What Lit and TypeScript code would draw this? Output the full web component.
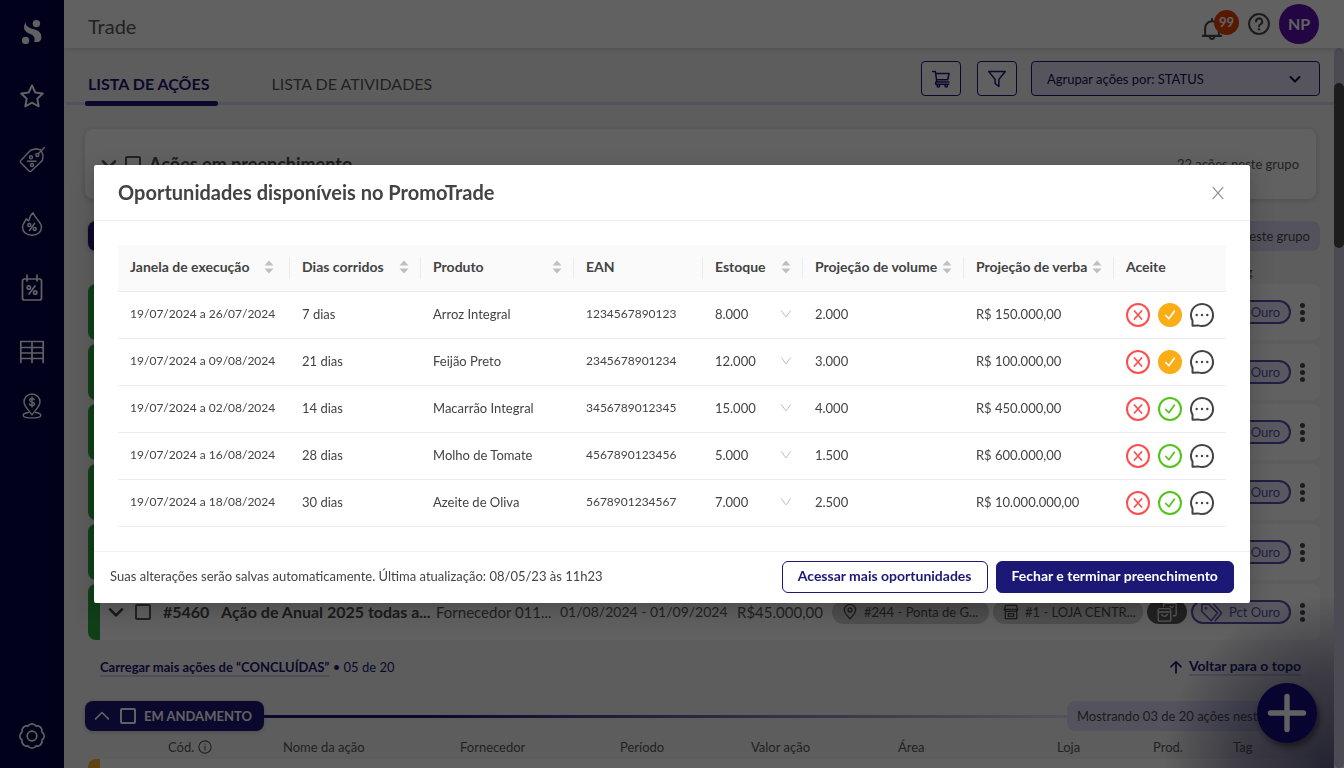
import { LitElement, html, svg, css } from "lit";
import { customElement, state } from "lit/decorators.js";
import { classMap } from "lit/directives/class-map.js";

const base = css`
  * { box-sizing: border-box; }
  button, select, input { font: inherit; color: inherit; margin: 0; }
  button { padding: 0; border: 0; background: none; cursor: pointer; }
  select { appearance: none; border: 0; border-radius: 0; background: none; padding: 0; outline: none; }
  a { color: inherit; text-decoration: none; }
  svg { display: block; flex: none; fill: none; stroke: currentColor; stroke-linecap: round; stroke-linejoin: round; }
  .solid { fill: currentColor; stroke: none; }
`;

const icon = (size: number, body: unknown, stroke = 2) =>
  html`<svg width=${size} height=${size} viewBox="0 0 24 24" stroke-width=${stroke} overflow="visible" aria-hidden="true">${body}</svg>`;

const glyph = {
  logo: svg`<g class="solid"><circle cx="16.4" cy="3.6" r="3.7"/><circle cx="5.6" cy="20.4" r="3.7"/><path d="M5.5 2C3.3 6.500 3.300 10.800 8.500 13.200C13 15 15.800 16.200 14.200 22L17.500 22C20.500 21.800 21.500 19.500 21.300 16.200C21 12 17.800 10.400 13 9C8.500 7.600 5.800 6.200 5.500 2Z"/></g>`,
  star: svg`<path d="M12 1.500l3.300 7 7.500 1-5.500 5.200 1.400 7.600L12 18.600l-6.700 3.700 1.400-7.600L1.200 9.500l7.500-1z"/>`,
  tag: svg`<path d="M10.500 2.200L16 .8l5 1.200 2 5-.6 5.500L11 23.300Q10 24 9 23L.8 14.800Q-.2 13.500.8 12.500Z"/><path d="M24.500 -.5L18.500 5.500M7.500 13.200h8.500"/><circle cx="17.300" cy="7" r="1.500"/><circle cx="11" cy="9.300" r="1.500"/><circle cx="12" cy="17" r="1.500"/>`,
  flame: svg`<path d="M13 .8C9.500 3.500 10 7 8.500 8.800C7.800 8.300 7.400 7.500 6 7C5.800 9.500 2.500 11 2.500 15C2.500 20 6.500 23.200 12 23.200S21.500 20 21.500 15C21.500 10 15.800 7.500 13 .8Z"/><path d="M14.500 11.500l-5 7"/><circle cx="9.300" cy="13" r="1.500"/><circle cx="14.700" cy="17" r="1.500"/>`,
  calendar: svg`<rect x="2.500" y="3" width="19" height="21" rx="2"/><path d="M7 -1v6M17 -1v6M15 10l-6 8"/><circle cx="8.800" cy="11.500" r="1.700"/><circle cx="15.200" cy="16.500" r="1.700"/>`,
  grid: svg`<path d="M.8 22.500V1.500h22.400v21M12 1.500v21M.8 7.500h22.400M.8 13h22.400M.8 18.500h22.400"/>`,
  pin: svg`<path d="M12 21C9 16 4 12.500 4 8a8 8 0 0 1 16 0C20 12.500 15 16 12 21Z"/><path d="M8.500 18.500C5 19 3.200 20 3.200 21.200c0 1.600 4 2.700 8.800 2.700s8.800-1.100 8.800-2.700c0-1.200-1.800-2.200-5.300-2.700"/><path d="M14.300 5.800C13.800 4 9.700 4 9.700 6.200c0 2.400 4.800 1.400 4.800 3.800 0 2.200-4.500 2.200-5 0M12 3v10"/>`,
  gear: svg`<circle cx="12" cy="12" r="4.800"/><path d="M21.900 7.900A4.800 4.800 0 0 1 21.900 16.100A4.800 4.800 0 0 1 16.100 21.900A4.800 4.800 0 0 1 7.900 21.900A4.800 4.800 0 0 1 2.100 16.100A4.800 4.800 0 0 1 2.100 7.900A4.800 4.800 0 0 1 7.900 2.100A4.800 4.800 0 0 1 16.100 2.100A4.800 4.800 0 0 1 21.900 7.900Z"/>`,
  bell: svg`<path d="M2 19.500h20M4.500 19V11a7.500 7.500 0 0 1 15 0v8M12 3.500V1M9.500 20a2.500 3 0 0 0 5 0"/>`,
  help: svg`<circle cx="12" cy="12" r="10.800"/><path d="M8.700 9.300a3.400 3.400 0 1 1 5 3Q12 13.300 12 14.600"/><circle class="solid" cx="12" cy="17.800" r="1.300"/>`,
  cart: svg`<path d="M.8 2h3.700l2 14h16M4.800 4.500h18L21 13H6.300M5 16v3h17.500"/><circle cx="8.500" cy="21" r="1.700"/><circle cx="19" cy="21" r="1.700"/>`,
  funnel: svg`<path d="M1 2h22l-8.500 10.500V22L9.500 18v-5.500z"/>`,
  down: svg`<path d="M3 8l9 9 9-9"/>`,
  up: svg`<path d="M1 17l11-11 11 11"/>`,
  arrowUp: svg`<path d="M12 22V3M3.500 11.500L12 3l8.500 8.500"/>`,
  place: svg`<path d="M12 22.500C8 17.500 3.500 13.500 3.500 9a8.500 8.500 0 0 1 17 0C20.500 13.500 16 17.500 12 22.500Z"/><circle cx="12" cy="9" r="3"/>`,
  shop: svg`<path d="M4 2h16l2 6H2zM3.500 8v14h17V8M2 8q.5 3 3.500 3h13q3 0 3.500-3"/><rect x="8" y="14.500" width="8" height="4"/>`,
  boxes: svg`<rect x="1.500" y="8" width="15" height="15" rx="1.500"/><path d="M8 5V3q0-1.500 1.500-1.500h12q1.500 0 1.500 1.500v12q0 1.500-1.500 1.500H19.500M1.500 12h15M5.500 15q3.500 4.500 7 0M15.500 5q2 2.500 4 0"/>`,
  tags: svg`<path d="M1 3.500v8L11 21.500l7-8.500-9.500-9.500zM14 3.500l8.500 9.500L15.500 21.500"/><circle cx="5.500" cy="8" r=".6"/>`,
  info: svg`<circle cx="12" cy="12" r="10.500"/><path d="M12 11v6M12 7v.3"/>`,
  close: svg`<path d="M3.500 2.500l17 19M20.500 2.500l-17 19"/>`,
  reject: svg`<circle cx="12" cy="12" r="11"/><path d="M8.400 8l7.200 8M15.600 8l-7.200 8" stroke-width="1.700"/>`,
  accept: svg`<circle cx="12" cy="12" r="11"/><path d="M7.700 12.500l3.200 3.200 5.400-7.500" stroke-width="1.700"/>`,
  accepted: svg`<circle class="solid" cx="12" cy="12" r="12"/><path stroke="#fff" d="M7.700 12.500l3.200 3.200 5.400-7.500" stroke-width="1.700"/>`,
  comment: svg`<path d="M2.500 22.800V17.500A11 11 0 1 1 12 23Q10 23 8.200 22.400Z"/><g class="solid"><circle cx="6.700" cy="12" r="1.200"/><circle cx="12" cy="12" r="1.200"/><circle cx="17.300" cy="12" r="1.200"/></g>`,
};

interface Offer { period: string; days: string; product: string; ean: string; stock: string; volume: string; budget: string; accepted?: boolean; }

@customElement("side-nav")
class SideNav extends LitElement {
  static styles = [base, css`
    :host { display: flex; flex-direction: column; background: #05054b; color: #fff; }
    a { height: 64px; display: grid; place-items: center; }
    .short { height: 44px; }
    .last { margin-top: auto; }
  `];
  render() {
    const items: [string, unknown, number, string][] = [
      ["Início", glyph.logo, 2, ""], ["Favoritos", glyph.star, 2, ""], ["Ofertas", glyph.tag, 1.4, ""],
      ["Promoções", glyph.flame, 1.5, ""], ["Calendário", glyph.calendar, 1.7, ""], ["Gôndolas", glyph.grid, 1.7, ""],
      ["Pontos", glyph.pin, 1.4, "short"], ["Configurações", glyph.gear, 1.7, "last"],
    ];
    return items.map(([label, body, w, cls]) => html`<a href="#" class=${cls} aria-label=${label}>${icon(24, body, w)}</a>`);
  }
}

@customElement("offers-dialog")
class OffersDialog extends LitElement {
  static styles = [base, css`
    :host { display: block; width: 86%; background: #fff; color: #434343; border-radius: 2px; font-size: 13px; line-height: 22px; box-shadow: 0 6px 16px rgba(0,0,0,.12), 0 9px 28px 8px rgba(0,0,0,.1); }
    header { display: flex; align-items: center; justify-content: space-between; height: 56px; padding: 0 24px; border-bottom: 1px solid #f0f0f0; }
    h2 { margin: 0; padding-bottom: 2px; font-size: 20px; line-height: 28px; font-weight: 700; }
    .close { width: 16px; height: 22px; display: grid; place-items: center; color: #8c8c8c; }
    .body { padding: 24px; }
    table { width: 100%; table-layout: fixed; border-collapse: separate; border-spacing: 0; }
    th, td { height: 47px; padding: 0 12px 2px; border-bottom: 1px solid #ececec; text-align: left; white-space: nowrap; }
    td:last-child { padding-bottom: 0; }
    th { background: #fafafa; font-size: 14px; font-weight: 700; position: relative; }
    th:not(:last-child)::after { content: ""; position: absolute; right: 0; top: 12px; width: 1px; height: 22px; background: #ebebeb; }
    th:first-child { padding-right: 16px; }
    .long { font-size: 12px; }
    .sort { display: flex; width: 100%; align-items: center; justify-content: space-between; font-weight: 700; }
    .sort svg { color: #bfbfbf; }
    .stock { display: grid; grid-template-columns: 1fr 10px; align-items: center; }
    .stock select { grid-area: 1 / 1 / 2 / 3; line-height: 22px; height: 22px; }
    .stock svg { grid-area: 1 / 2; color: #bfbfbf; pointer-events: none; }
    .acts { display: flex; gap: 8px; }
    .no { color: #ff4d4f; }
    .yes { color: #52c41a; }
    .yes.on { color: #faad14; }
    footer { display: flex; align-items: flex-start; gap: 8px; height: 52px; padding: 9px 16px 10px; border-top: 1px solid #f0f0f0; }
    footer p { margin: 0; flex: 1; line-height: 30px; }
    .btn { height: 32px; padding: 0 15px 2px; border: 1px solid #1b1876; border-radius: 6px; font-size: 14px; font-weight: 700; color: #1b1876; white-space: nowrap; }
    .primary { background: #1b1876; color: #fff; }
  `];

  @state() private offers: Offer[] = [
    { period: "19/07/2024 a 26/07/2024", days: "7 dias", product: "Arroz Integral", ean: "1234567890123", stock: "8.000", volume: "2.000", budget: "R$ 150.000,00", accepted: true },
    { period: "19/07/2024 a 09/08/2024", days: "21 dias", product: "Feijão Preto", ean: "2345678901234", stock: "12.000", volume: "3.000", budget: "R$ 100.000,00", accepted: true },
    { period: "19/07/2024 a 02/08/2024", days: "14 dias", product: "Macarrão Integral", ean: "3456789012345", stock: "15.000", volume: "4.000", budget: "R$ 450.000,00" },
    { period: "19/07/2024 a 16/08/2024", days: "28 dias", product: "Molho de Tomate", ean: "4567890123456", stock: "5.000", volume: "1.500", budget: "R$ 600.000,00" },
    { period: "19/07/2024 a 18/08/2024", days: "30 dias", product: "Azeite de Oliva", ean: "5678901234567", stock: "7.000", volume: "2.500", budget: "R$ 10.000.000,00" },
  ];

  private toggle(o: Offer, accepted: boolean) {
    this.offers = this.offers.map((x) => (x === o ? { ...x, accepted } : x));
  }

  render() {
    const cols: [string, number, boolean][] = [
      ["Janela de execução", 172, true], ["Dias corridos", 131, true], ["Produto", 153, true], ["EAN", 129, false],
      ["Estoque", 100, true], ["Projeção de volume", 161, true], ["Projeção de verba", 150, true], ["Aceite", 112, false],
    ];
    return html`
      <header>
        <h2>Oportunidades disponíveis no PromoTrade</h2>
        <button class="close" aria-label="Fechar">${icon(14, glyph.close, 2)}</button>
      </header>
      <div class="body">
        <table>
          <colgroup>${cols.map(([, w]) => html`<col style="width:${w / 11.08}%">`)}</colgroup>
          <thead><tr>${cols.map(([label, , sortable]) => html`
            <th scope="col">${sortable
              ? html`<button class="sort">${label}<svg width="10" height="14" viewBox="0 0 10 14"><path class="solid" d="M5 .5L9.500 5.500H.5zM.5 8.500h9L5 13.500z"/></svg></button>`
              : label}</th>`)}</tr></thead>
          <tbody>${this.offers.map((o) => html`
            <tr>
              <td class="long">${o.period}</td><td>${o.days}</td><td>${o.product}</td><td class="long">${o.ean}</td>
              <td><div class="stock">
                <select aria-label="Estoque de ${o.product}"><option>${o.stock}</option></select>
                ${icon(10, svg`<path d="M1 4l11 15 11-15"/>`, 2.4)}
              </div></td>
              <td>${o.volume}</td><td>${o.budget}</td>
              <td><div class="acts">
                <button class="no" aria-label="Recusar" @click=${() => this.toggle(o, false)}>${icon(24, glyph.reject, 2)}</button>
                <button class=${classMap({ yes: true, on: !!o.accepted })} aria-label="Aceitar" @click=${() => this.toggle(o, true)}>${icon(24, o.accepted ? glyph.accepted : glyph.accept, 2)}</button>
                <button aria-label="Comentar">${icon(24, glyph.comment, 2)}</button>
              </div></td>
            </tr>`)}</tbody>
        </table>
      </div>
      <footer>
        <p>Suas alterações serão salvas automaticamente. Última atualização: 08/05/23 às 11h23</p>
        <button class="btn">Acessar mais oportunidades</button>
        <button class="btn primary">Fechar e terminar preenchimento</button>
      </footer>`;
  }
}

@customElement("app-root")
class AppRoot extends LitElement {
  static styles = [base, css`
    :host { display: grid; grid-template-columns: 64px minmax(0, 1fr); grid-template-rows: minmax(0, 1fr); height: 100vh; overflow: hidden; font-family: Lato, "Noto Sans", sans-serif; font-size: 13px; line-height: 22px; color: #595959; }
    .page { display: grid; grid-template-rows: 48px minmax(0, 1fr); min-width: 0; background: #f5f5f5; }
    .top { display: flex; align-items: center; gap: 20px; padding: 0 25px 0 24px; background: #fff; box-shadow: 0 1px 6px rgba(0,0,0,.16); z-index: 1; }
    h1 { flex: 1; margin: 0; padding-top: 4px; font-size: 20px; font-weight: 400; }
    .top-actions { display: flex; align-items: center; gap: 9px; }
    .top-actions button { color: #4a4a4a; }
    .bell { position: relative; width: 38px; padding-top: 10px; }
    .bell .badge { position: absolute; left: 13px; top: 2px; width: 25px; height: 25px; border-radius: 50%; background: #e8430a; color: #fff; font-weight: 700; line-height: 25px; text-align: center; }
    .top-actions .avatar { width: 40px; height: 40px; border-radius: 50%; background: #5b0fae; color: #fff; font-size: 16px; font-weight: 700; }
    .view { display: grid; grid-template-columns: minmax(0, 1fr) 10px; min-height: 0; }
    .content { overflow: hidden; }
    .scroll { background: #c9c6dc; border-radius: 5px; padding-top: 35px; }
    .thumb { height: 165px; border-radius: 5px; background: #4a4a4a; }
    .bar { display: flex; align-items: flex-start; height: 58px; padding: 0 14px 0 21px; background: linear-gradient(#dcdaf5, #dcdaf5) 2px 54px / 100% 3px no-repeat; }
    .tabs { flex: 1; display: flex; gap: 51px; }
    .tab { position: relative; height: 58px; padding: 13px 8px 0 3px; font-size: 16px; line-height: 22px; white-space: nowrap; }
    .tab.on { color: #1b1876; font-weight: 700; }
    .tab.on::after { content: ""; position: absolute; left: 0; right: 0; bottom: 0; height: 5px; border-radius: 2px; background: #1b1876; }
    .tools { display: flex; gap: 16px; padding-top: 13px; color: #1b1876; }
    .tool { width: 40px; height: 35px; display: grid; place-items: center; border: 1px solid #1b1876; border-radius: 4px; background: #fdfdff; }
    .group { display: grid; grid-template-columns: 1fr 16px 14px; width: 289px; height: 35px; align-items: center; border: 1px solid #1b1876; border-radius: 4px; background: #e2e0f8; color: #120f50; margin-left: -2px; }
    .group select { grid-area: 1 / 1 / 2 / 4; height: 33px; padding-left: 15px; }
    .group svg { grid-area: 1 / 2; pointer-events: none; }
    .panel { display: flex; align-items: center; height: 70px; margin: 23px 18px 22px 21px; padding: 0 17px 0 16px; border-radius: 8px; background: #fff; box-shadow: 0 1px 6px rgba(0,0,0,.18); }
    .panel h3 { flex: 1; margin: 0 0 0 8px; font-size: 18px; color: #4a4a4a; }
    .panel input { margin-left: 8px; }
    input { appearance: none; width: 16px; height: 16px; flex: none; border: 2px solid currentColor; border-radius: 2px; }
    .strip { display: flex; align-items: center; margin: 0 14px 0 21px; }
    .name { display: flex; align-items: center; gap: 11px; height: 30px; padding: 0 12px 0 10px; border-radius: 8px; background: #1b1876; color: #fff; font-weight: 700; white-space: nowrap; box-shadow: 0 1px 5px rgba(0,0,0,.2); }
    .name span { margin-left: -3px; }
    .rule { flex: 1; height: 3px; background: linear-gradient(90deg, #1b1876 20%, #dcdaf5); }
    .count { height: 30px; min-width: 253px; padding: 0 10px; border-radius: 8px; background: #dcdaf5; line-height: 30px; white-space: nowrap; color: #4a4a4a; }
    .heads { display: grid; grid-template-columns: 115fr 177fr 160fr 131fr 147fr 159fr 96fr 80fr 87fr; height: 22px; margin: 5px 14px 1px 104px; white-space: nowrap; }
    .heads span { display: flex; align-items: center; gap: 4px; }
    .first .strip { margin-left: 24px; }
    .first .count { text-align: right; }
    .first .heads { margin-top: 10px; }
    .list { display: grid; gap: 4px; margin: 0 14px 0 24px; }
    .row { display: flex; align-items: center; height: 56px; padding-right: 13px; border-radius: 8px; border-left: 12px solid #2ba63f; background: #fff; white-space: nowrap; }
    .row.wait { border-left-color: #f5b32e; }
    .row > svg { color: #434343; margin-left: 8px; }
    .row input { margin: 0 12px 0 11px; }
    .cells { flex: 1; display: grid; grid-template-columns: minmax(0, 58fr) minmax(0, 215fr) minmax(0, 124fr) minmax(0, 177fr) minmax(0, 95fr); align-items: center; min-width: 0; font-size: 15px; }
    .cells b { font-size: 16px; color: #4a4a4a; }
    .cells .dates { font-size: 14px; }
    .chips { display: flex; align-items: center; gap: 4px; color: #4a4a4a; }
    .chip { display: flex; align-items: center; gap: 6px; height: 24px; padding: 0 10px; border-radius: 12px; background: #cfcfcf; }
    .chip.area { width: 157px; }
    .chip.shop { width: 150px; }
    .chip.dark { background: #595959; color: #e5e5e5; }
    .chip.tag { width: 100px; background: #eae8fb; border: 2px solid #5a4fb0; color: #5a4fb0; padding: 0 8px; }
    .dots { display: grid; gap: 2px; margin-left: 3px; padding: 0 2px; }
    .dots i { width: 5px; height: 5px; border-radius: 50%; background: #4a4a4a; }
    .more { display: flex; justify-content: space-between; align-items: center; margin: 16px 33px 23px 36px; color: #1b1876; }
    .more a { font-weight: 700; border-bottom: 2px solid #d0cdf0; line-height: 16px; }
    .back { display: flex; gap: 6px; align-items: center; font-size: 14px; }
    .fab { position: fixed; right: 27px; bottom: 25px; width: 60px; height: 60px; display: grid; place-items: center; border-radius: 50%; background: #130d7c; color: #fff; box-shadow: 2px 4px 6px rgba(0,0,0,.45); }
    .glow { position: fixed; right: 10px; bottom: 0; width: 170px; height: 170px; background: radial-gradient(circle at 100% 100%, rgba(30,25,80,.7), rgba(30,25,80,.4) 40%, transparent 72%); }
    .mask { position: fixed; inset: 0; display: grid; place-items: center; background: rgba(0,0,0,.62); z-index: 5; }
  `];

  private row() {
    return html`
      <div class="row">
        ${icon(16, glyph.down, 4)}
        <input type="checkbox" aria-label="Selecionar ação #5460">
        <div class="cells"><b>#5460</b><b>Ação de Anual 2025 todas a...</b><span>Fornecedor 011...</span><span class="dates">01/08/2024 - 01/09/2024</span><span>R$45.000,00</span></div>
        <div class="chips">
          <span class="chip area">${icon(16, glyph.place)}#244 - Ponta de G...</span>
          <span class="chip shop">${icon(16, glyph.shop)}#1 - LOJA CENTR...</span>
          <span class="chip dark">${icon(20, glyph.boxes, 1.6)}</span>
          <span class="chip tag">${icon(22, glyph.tags, 1.7)}Pct Ouro</span>
          <button class="dots" aria-label="Mais opções"><i></i><i></i><i></i></button>
        </div>
      </div>`;
  }

  private section(name: string, count: string, cls = "") {
    return html`<section class=${cls}>
      <div class="strip">
        <div class="name">${icon(14, glyph.up, 2.8)}<input type="checkbox" aria-label=${name}><span>${name}</span></div>
        <div class="rule"></div>
        <div class="count">${count}</div>
      </div>
      <div class="heads"><span>Cód. ${icon(14, glyph.info)}</span><span>Nome da ação</span><span>Fornecedor</span><span>Período</span><span>Valor ação</span><span>Área</span><span>Loja</span><span>Prod.</span><span>Tag</span></div>
    </section>`;
  }

  render() {
    return html`
      <side-nav></side-nav>
      <div class="page">
        <div class="top">
          <h1>Trade</h1>
          <div class="top-actions">
            <button class="bell" aria-label="Notificações">${icon(22, glyph.bell, 2.2)}<span class="badge">99</span></button>
            <button aria-label="Ajuda">${icon(22, glyph.help, 2.2)}</button>
            <button class="avatar">NP</button>
          </div>
        </div>
        <div class="view">
          <div class="content">
            <div class="bar">
              <div class="tabs"><button class="tab on">LISTA DE AÇÕES</button><button class="tab">LISTA DE ATIVIDADES</button></div>
              <div class="tools">
                <button class="tool" aria-label="Carrinho">${icon(18, glyph.cart)}</button>
                <button class="tool" aria-label="Filtrar">${icon(18, glyph.funnel)}</button>
                <div class="group"><select aria-label="Agrupar ações"><option>Agrupar ações por: STATUS</option></select>${icon(12, glyph.down, 4)}</div>
              </div>
            </div>
            <div class="panel">${icon(16, glyph.down, 4)}<input type="checkbox" aria-label="Ações em preenchimento"><h3>Ações em preenchimento</h3><span>22 ações neste grupo</span></div>
            ${this.section("CONCLUÍDAS", "Mostrando 05 de 20 ações neste grupo", "first")}
            <div class="list">${[0, 1, 2, 3, 4, 5].map(() => this.row())}</div>
            <div class="more">
              <span><a href="#">Carregar mais ações de “CONCLUÍDAS”</a> • 05 de 20</span>
              <span class="back">${icon(14, glyph.arrowUp, 3)}<a href="#">Voltar para o topo</a></span>
            </div>
            ${this.section("EM ANDAMENTO", "Mostrando 03 de 20 ações neste grupo")}
            <div class="list"><div class="row wait"></div></div>
          </div>
          <div class="scroll"><div class="thumb"></div></div>
        </div>
      </div>
      <div class="glow"></div>
      <button class="fab" aria-label="Nova ação">${icon(36, svg`<path d="M12 1v22M1 12h22"/>`, 3.6)}</button>
      <div class="mask"><offers-dialog role="dialog" aria-modal="true"></offers-dialog></div>`;
  }
}
